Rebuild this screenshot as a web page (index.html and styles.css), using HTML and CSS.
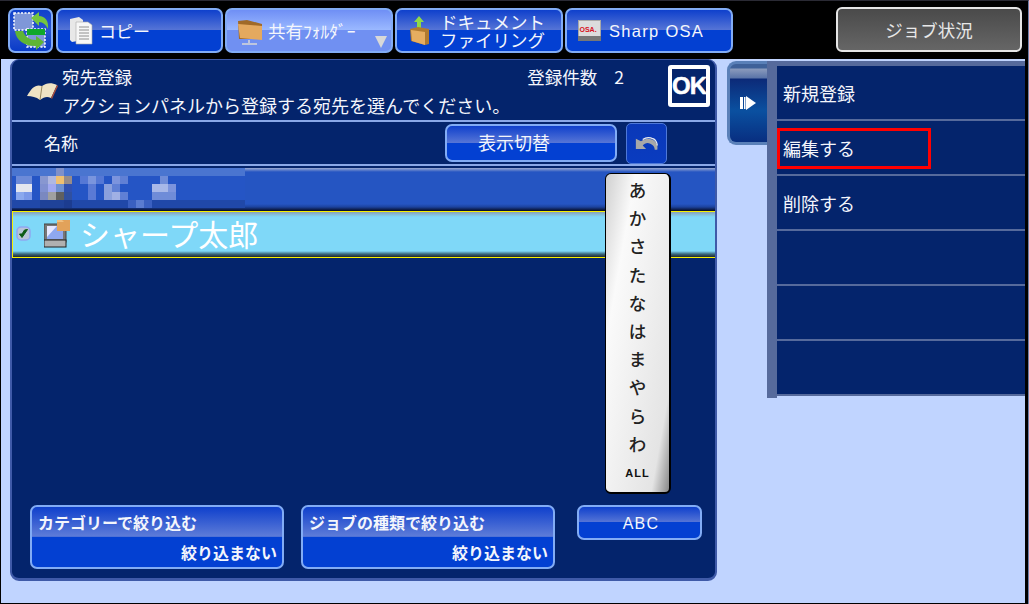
FILE: index.html
```html
<!DOCTYPE html>
<html lang="ja">
<head>
<meta charset="utf-8">
<title>宛先登録</title>
<link rel="stylesheet" href="styles.css">
</head>
<body>
<div class="screen">
  <header class="topbar">
    <button class="btn home" aria-label="home">
      <svg width="41" height="41" viewBox="0 0 41 41">
        <rect x="4" y="3" width="19" height="17" fill="#7f97d8" stroke="#fff" stroke-width="1.5" stroke-dasharray="2 1.5"/>
        <rect x="17" y="19" width="18" height="18" fill="#7f97d8" stroke="#fff" stroke-width="1.5" stroke-dasharray="2 1.5"/>
        <rect x="17" y="19" width="18" height="6" fill="#10a82a"/>
        <path d="M21 8l8-6v4c6 0 10 5 9 13-2-4-5-7-9-7v4z" fill="#74c63e"/>
        <path d="M34 32l-8-6v4c-6 0-11-3-13-9h-8c1 9 9 15 21 15v4z" fill="#5fb534"/>
      </svg>
    </button>
    <button class="btn tab first">
      <svg class="tab-ic" width="26" height="30" viewBox="0 0 26 30">
        <path d="M2 3l9-2 4 3v20l-11 2-2-2z" fill="#e8e8e8"/>
        <path d="M8 6h12l4 3v19H8z" fill="#f7f7f7" stroke="#aaa" stroke-width=".6"/>
        <path d="M11 11h10M11 14h10M11 17h10M11 20h10M11 23h10" stroke="#777" stroke-width=".8"/>
      </svg>
      <span class="tab-label">コピー</span>
    </button>
    <button class="btn tab active">
      <svg class="tab-ic" width="26" height="30" viewBox="0 0 26 30">
        <path d="M1 5l9-1 15 4v15H2z" fill="#a06a28"/>
        <path d="M1 8l24 2v14L3 22z" fill="#e4a95f"/>
        <path d="M12 24v3M5 28h15" stroke="#d8d8d8" stroke-width="1.5"/>
      </svg>
      <span class="tab-label shared">共有ﾌｫﾙﾀﾞｰ</span>
      <svg class="tab-arrow" width="14" height="13" viewBox="0 0 14 13"><path d="M1 1h12l-6 12z" fill="#d8d8d8"/></svg>
    </button>
    <button class="btn tab">
      <svg class="tab-ic doc-ic" width="20" height="30" viewBox="0 0 20 30">
        <path d="M9 0l5 6h-3v7H7V6H4z" fill="#8fd84a"/>
        <path d="M0 13l8-2 11 2v15l-4 1-14-4z" fill="#b07a30"/>
        <path d="M1 14l14 2v13L2 25z" fill="#e6ad60"/>
      </svg>
      <span class="tab-label two">ドキュメント<br>ファイリング</span>
    </button>
    <button class="btn tab">
      <svg class="tab-ic osa-ic" width="23" height="21" viewBox="0 0 23 21">
        <rect width="23" height="21" fill="#a8a8a8"/>
        <rect x="1" y="1" width="21" height="15" fill="#dcdcdc"/>
        <rect y="16" width="23" height="5" fill="#777"/>
        <text x="1.5" y="12" class="osa-txt">OSA.</text>
      </svg>
      <span class="tab-label latin">Sharp OSA</span>
    </button>
    <button class="job">ジョブ状況</button>
  </header>

  <main class="main">
    <section class="panel">
      <div class="head">
        <svg class="book" width="32" height="24" viewBox="0 0 32 24">
          <path d="M1 17C6 8 10 5 16 7c4-3 9-4 15-1l-6 13c-4-2-7-1-11 2-4-3-8-4-13-4z" fill="#efe3c4"/>
          <path d="M16 7l-2 14" stroke="#9a8a60" stroke-width="1"/>
          <path d="M31 6l-6 13 1 1 6-13z" fill="#b0503a"/>
        </svg>
        <div class="head-text">
          <div class="head-top"><span>宛先登録</span><span class="count">登録件数<span class="count-n">2</span></span></div>
          <div class="msg">アクションパネルから登録する宛先を選んでください。</div>
        </div>
        <div class="ok">OK</div>
      </div>
      <div class="colrow">
        <span class="colname">名称</span>
        <button class="btn toggle">表示切替</button>
        <button class="back" aria-label="back">
          <svg width="24" height="18" viewBox="0 0 28 20">
            <path d="M1 5v12h12l-4-4c3-4 8-4 12 0 1 1 2 3 2 5h3c1-5-1-10-6-12-5-2-9-1-13 2z" fill="#a8a8a8"/>
            <path d="M9 6c4-3 8-3 12-1 3 1 5 5 5 8" fill="none" stroke="#eee" stroke-width="1.5"/>
          </svg>
        </button>
      </div>
      <div class="list">
        <div class="row-blur">
          <svg class="mosaic" width="233" height="40" viewBox="0 0 233 40" aria-hidden="true">
            <rect width="233" height="8" fill="#4a75d0"/>
            <rect x="44" width="8" height="8" fill="#8090c8"/>
            <rect y="32" width="233" height="8" fill="#2048a8"/>
            <rect y="8" width="233" height="24" fill="#2555c5"/>
            <g transform="translate(0,8)">
              <rect x="4" width="16" height="8" fill="#6c8ad8"/><rect x="28" width="8" height="8" fill="#8897d0"/><rect x="36" width="8" height="8" fill="#b0b8e0"/><rect x="44" width="8" height="8" fill="#f0c070"/><rect x="52" width="8" height="8" fill="#988c88"/><rect x="68" width="8" height="8" fill="#5578d5"/><rect x="76" width="8" height="8" fill="#7a95dd"/><rect x="84" width="8" height="8" fill="#5578d5"/><rect x="100" width="8" height="8" fill="#7c94dd"/><rect x="108" width="8" height="8" fill="#6080d5"/><rect x="148" width="8" height="8" fill="#6f8cd8"/>
            </g>
            <g transform="translate(0,16)">
              <rect x="4" width="16" height="8" fill="#e4e6ee"/><rect x="28" width="8" height="8" fill="#8090d0"/><rect x="36" width="8" height="8" fill="#a0a8f0"/><rect x="44" width="8" height="8" fill="#6f90d0"/><rect x="52" width="8" height="8" fill="#3050b0"/><rect x="76" width="8" height="8" fill="#5a7ad5"/><rect x="92" width="8" height="8" fill="#8aa0dd"/><rect x="100" width="8" height="8" fill="#6080d5"/><rect x="140" width="16" height="8" fill="#a8b8e8"/><rect x="156" width="8" height="8" fill="#7c94dd"/>
            </g>
            <g transform="translate(0,24)">
              <rect x="4" width="8" height="8" fill="#8aa8ee"/><rect x="12" width="8" height="8" fill="#7a98e8"/><rect x="28" width="8" height="8" fill="#7a88c0"/><rect x="36" width="8" height="8" fill="#a0a0a0"/><rect x="44" width="8" height="8" fill="#606060"/><rect x="52" width="8" height="8" fill="#3050a0"/><rect x="76" width="8" height="8" fill="#5a7ad5"/><rect x="92" width="8" height="8" fill="#8aa0dd"/><rect x="100" width="8" height="8" fill="#a0b0e4"/><rect x="108" width="8" height="8" fill="#6080d5"/><rect x="140" width="24" height="8" fill="#6f8cd8"/>
            </g>
            <g transform="translate(0,32)">
              <rect x="28" width="24" height="8" fill="#1f4299"/><rect x="52" width="8" height="8" fill="#1c3c90"/><rect x="116" width="8" height="8" fill="#3a60c0"/><rect x="124" width="8" height="8" fill="#5a7cd0"/><rect x="132" width="8" height="8" fill="#3a60c0"/>
            </g>
          </svg>
        </div>
        <div class="row-sel">
          <svg class="check" width="15" height="15" viewBox="0 0 15 15">
            <rect x="1" y="1" width="13" height="13" rx="4" fill="#b8c4d8" stroke="#8fa8f0" stroke-width="1.5"/>
            <path d="M3.5 8l2.5 3.5 5.5-8-3 .5-2.5 4z" fill="#0c5a14" stroke="#0c5a14"/>
          </svg>
          <svg class="pc" width="26" height="28" viewBox="0 0 26 28">
            <rect x="0" y="4" width="22" height="18" fill="#777" stroke="#444"/>
            <rect x="3" y="6" width="16" height="13" fill="#8fa8f0"/>
            <path d="M3 6h10L3 17z" fill="#e8e8ff"/>
            <rect x="0" y="20" width="22" height="7" fill="#b0b0b0" stroke="#222"/>
            <rect x="13" y="0" width="13" height="11" fill="#e2a25a"/>
            <path d="M13 0h5l2 2h-7z" fill="#f0c080"/>
          </svg>
          <span class="name">シャープ太郎</span>
        </div>
      </div>
      <div class="filters">
        <button class="btn filter"><span class="f-top">カテゴリーで絞り込む</span><span class="f-bottom">絞り込まない</span></button>
        <button class="btn filter second"><span class="f-top">ジョブの種類で絞り込む</span><span class="f-bottom">絞り込まない</span></button>
        <button class="btn abc">ABC</button>
      </div>
      <div class="index">
        <span>あ</span><span>か</span><span>さ</span><span>た</span><span>な</span><span>は</span><span>ま</span><span>や</span><span>ら</span><span>わ</span><span class="all">ALL</span>
      </div>
    </section>

    <aside class="side">
      <div class="handle"><svg width="16" height="14" viewBox="0 0 16 14"><rect x="0" y="1" width="3" height="12" fill="#fff"/><rect x="4" y="1" width="1.5" height="12" fill="#fff"/><path d="M6 0l10 7-10 7z" fill="#fff"/></svg></div>
      <div class="actions">
        <div class="action">新規登録</div>
        <div class="action">編集する<div class="redbox"></div></div>
        <div class="action">削除する</div>
        <div class="action"></div>
        <div class="action"></div>
        <div class="action"></div>
      </div>
    </aside>
  </main>
</div>
</body>
</html>
```

FILE: styles.css
```css
* { box-sizing: border-box; }
html, body { margin: 0; padding: 0; background: #000; overflow: hidden; }
body, button { font-family: "Noto Sans CJK JP", "Liberation Sans", sans-serif; color: #f4f6fc; }
button { padding: 0; margin: 0; cursor: default; }

.screen { width: 1029px; height: 604px; display: flex; flex-direction: column; background: #000; border-top: 1px solid #2a2a34; border-right: 1px solid #6f7fa8; }

.topbar { height: 58px; padding: 7px 0 0 8px; display: flex; gap: 2px; align-items: flex-start; flex: none; }
.btn {
  border: 2px solid #82acf5;
  border-radius: 7px;
  background: linear-gradient(#0f40cc 0%, #5675d6 49%, #0340d2 50%, #0340d2 100%);
  color: #f4f6fc;
}
.home { width: 45px; height: 45px; margin-right: 1px; display: flex; align-items: center; justify-content: center; background: linear-gradient(#0f40cc 0%, #2a55d0 50%, #0a3bc8 100%); }
.tab { width: 168px; height: 45px; display: flex; align-items: center; position: relative; padding-left: 10px; }
.first { width: 167px; }
.tab-ic { flex: none; }
.doc-ic { margin-left: 3px; }
.osa-ic { margin-left: 1px; }
.tab-label { margin-left: 5px; font-size: 17px; line-height: 20px; white-space: nowrap; }
.tab-label.shared { font-size: 17.5px; }
.tab-label.two { margin-left: 10px; line-height: 18px; text-align: center; font-size: 17.5px; }
.tab-label.latin { margin-left: 8px; font-family: "Liberation Sans", sans-serif; font-size: 16.5px; letter-spacing: 1.3px; }
.osa-txt { font: bold 7px "Liberation Sans", sans-serif; fill: #d81020; }
.active { background: linear-gradient(#6f8ff5 0%, #9bb9ff 49%, #7090f2 50%, #7090f2 100%); }
.tab-arrow { position: absolute; right: 3px; bottom: 3px; }
.job {
  margin-left: auto; margin-right: 6px; margin-top: -1px; width: 186px; height: 45px;
  border: 2px solid #e6e6e6; border-radius: 6px;
  background: linear-gradient(#4a4a4a, #666);
  color: #e8e8e8; font-size: 17.5px;
}

.main { flex: 1; margin: 0 3px 1px 1px; background: #c0d4ff; padding-left: 9px; display: flex; align-items: flex-start; }

.panel {
  position: relative; width: 707px; height: 522px; flex: none;
  background: #04246c; border: solid #3f5aa8; border-width: 1px 2px 3px 2px;
  border-radius: 9px; display: flex; flex-direction: column; color: #f4f6fc;
}
.head { height: 62px; display: flex; flex: none; font-size: 17.5px; line-height: 28px; border-bottom: 2px solid #8aa8e8; }
.book { margin: 19px 4px 0 14px; flex: none; }
.head-text { width: 606px; padding-top: 3px; flex: none; white-space: nowrap; }
.head-top { display: flex; justify-content: space-between; padding-right: 44px; }
.msg { font-size: 18px; }
.count { font-size: 17.5px; }
.count-n { margin-left: 17px; }
.ok {
  width: 42px; height: 42px; margin-top: 5px; border: 4px solid #fff; border-radius: 3px;
  font: bold 24px/34px "Liberation Sans", sans-serif; text-align: center; letter-spacing: -1px; color: #fff; background: #04246c;
  -webkit-text-stroke: .5px #fff;
}

.colrow { height: 44px; flex: none; display: flex; align-items: center; border-bottom: 2px solid #8aa8e8; }
.colname { margin-left: 32px; font-size: 17px; width: 401px; padding-bottom: 2px; }
.toggle { width: 172px; height: 38px; font-size: 18px; padding: 0 34px 2px 0; }
.back { width: 41px; height: 41px; margin-left: 9px; border: 1px solid #4e78d8; border-radius: 5px; background: linear-gradient(#0a38b8, #0a3cc0); display: flex; align-items: center; justify-content: center; }

.list { flex: 1; display: flex; flex-direction: column; padding-top: 2px; }
.row-blur { height: 43px; flex: none; background: linear-gradient(#9aa9d2 0, #2555c2 4px, #2555c2 36px, #1c429c 39px, #050a20 43px); }
.mosaic { display: block; }
.row-sel {
  height: 47px; flex: none; display: flex; align-items: center; padding-bottom: 2px;
  border: solid #f6f000; border-width: 1px 0 1px 1px;
  background: linear-gradient(#8aa0b8 0, #7fd8f8 5px, #7fd8f8 39px, #3a6a80 42px, #20282c 45px);
}
.check { margin-left: 3px; flex: none; }
.pc { margin-left: 13px; flex: none; }
.name { margin: 0 0 1px 10px; font-size: 30px; line-height: 40px; color: #fff; white-space: nowrap; }

.filters { flex: none; display: flex; align-items: flex-start; padding: 0 0 9px 18px; height: 73px; }
.filter { width: 254px; height: 64px; display: flex; flex-direction: column; background: linear-gradient(#0f40cc 0%, #5e7cd8 49%, #0340d2 50%); font-weight: 700; font-size: 16px; }
.second { margin-left: 17px; }
.f-top { height: 30px; line-height: 30px; padding-left: 6px; text-align: left; }
.f-bottom { line-height: 30px; padding-right: 5px; text-align: right; }
.abc { width: 125px; height: 35px; margin-left: 22px; font-family: "Liberation Sans", sans-serif; font-size: 16px; letter-spacing: 1.2px; padding: 3px 0 0 3px; background: linear-gradient(#0f40cc 0%, #5675d6 49%, #0340d2 50%); }

.index {
  position: absolute; left: 593px; top: 113px; width: 66px; height: 321px;
  border: 1px solid #000; border-right-width: 2px; border-bottom-width: 2px; border-radius: 6px;
  background: linear-gradient(100deg, #d0d0d0 0, #fafafa 25%, #e4e4e4 85%, #888 100%);
  display: flex; flex-direction: column; align-items: center; padding-top: 2px;
  color: #222; font-size: 17.5px; font-weight: 500;
}
.index span { height: 28.2px; line-height: 28px; }
.index .all { font: bold 11px/30px "Liberation Sans", sans-serif; letter-spacing: 1px; color: #111; }

.side { margin-left: 10px; display: flex; align-items: flex-start; padding-top: 2px; flex: 1; }
.handle {
  width: 40px; height: 84px; flex: none; border: 3px solid #5a80b8; border-right: 0; border-radius: 9px 0 0 9px;
  background: linear-gradient(#3f6199 0, #3f6199 4px, #8a9abc 5px, #5a74a8 14px, #0c2a78 15px, #0a50a0 60%, #082e80 100%);
  display: flex; align-items: center; justify-content: center; padding-left: 1px;
  padding-right: 3px;
}
.actions { flex: 1; border-left: 10px solid #566a9c; display: flex; flex-direction: column; height: 337px; padding-top: 5px; background: linear-gradient(#566a9c 5px, transparent 5px); }
.action {
  position: relative; height: 55px; flex: none; border-bottom: 2px solid #566a9c; background: #04246c;
  padding-left: 6px; font-size: 18px; line-height: 54px; color: #f4f6fc;
}
.redbox { position: absolute; left: 0; top: 7px; width: 154px; height: 41px; border: 3px solid #f00; }
```
